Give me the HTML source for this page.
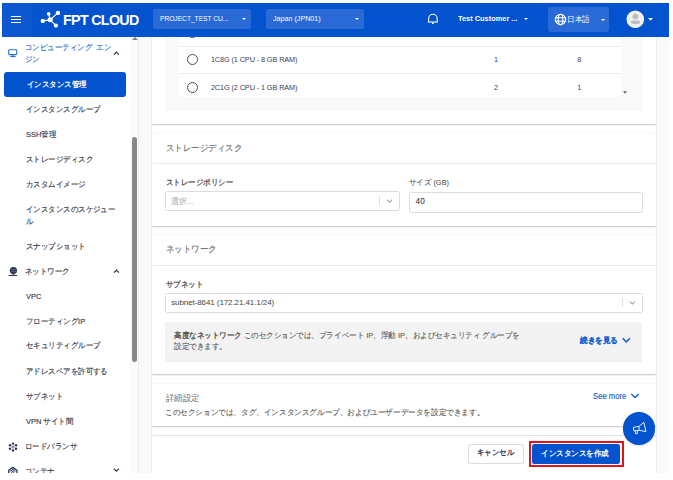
<!DOCTYPE html>
<html><head><meta charset="utf-8">
<style>
*{margin:0;padding:0;box-sizing:border-box}
html,body{width:673px;height:480px;background:#fff;overflow:hidden;font-family:"Liberation Sans",sans-serif}
#app{position:absolute;left:0;top:0;width:673px;height:480px;clip-path:inset(3px 4px 7px 2px);background:#f9f9f9}
.a{position:absolute;white-space:nowrap}
/* header */
#hdr{position:absolute;left:0;top:0;width:673px;height:36.5px;background:#0352ce}
#ham{position:absolute;left:0;top:0;width:32px;height:36.5px;background:#0d58d0}
.hb{position:absolute;left:11px;width:10px;height:1.3px;background:#fff}
.dd{position:absolute;top:9px;height:20px;background:#2a6ad6;border-radius:2px;color:#fff;font-size:7.8px;line-height:20px}
.sx{position:absolute;display:inline-block;white-space:nowrap;transform-origin:0 50%}
.caret{position:absolute;width:0;height:0;border-left:2.7px solid transparent;border-right:2.7px solid transparent;border-top:2.8px solid #fff}
/* sidebar */
#side{position:absolute;left:0;top:36.5px;width:130px;height:450px;background:#fff}
#strack{position:absolute;left:130px;top:36.5px;width:8px;height:450px;background:#fafafa}
#sline{position:absolute;left:138px;top:36.5px;width:1px;height:450px;background:#ececec}
.si{position:absolute;left:26.2px;margin-top:0.8px;font-size:8px;line-height:12px;color:#353a4c;-webkit-text-stroke:0.15px currentColor;white-space:nowrap;transform-origin:0 50%;transform:scaleX(0.93)}
.radio{position:absolute;left:187px;width:11px;height:11px;border:1.1px solid #4a5170;border-radius:50%}
.tt{position:absolute;white-space:nowrap;font-size:7.3px;line-height:10px;color:#3c4150}
.ct{position:absolute;left:166px;white-space:nowrap;font-size:9px;line-height:12px;color:#737373;-webkit-text-stroke:0.15px #737373;transform-origin:0 50%;transform:scaleX(0.94)}
.lb{position:absolute;left:166px;margin-top:0.6px;white-space:nowrap;font-size:8px;line-height:12px;color:#545454;font-weight:bold;transform-origin:0 50%;transform:scaleX(0.93)}
.inp{position:absolute;left:165.4px;height:20.2px;border:1px solid #dcdcdc;border-radius:2.5px;background:#fff}
.dsc{position:absolute;white-space:nowrap;font-size:8px;line-height:11px;color:#5a5a5a;-webkit-text-stroke:0.12px currentColor;transform-origin:0 50%;transform:scaleX(0.94)}
.card{position:absolute;left:151px;width:506px;background:#fff;border:1px solid #ebebeb;border-top-color:#f7f7f7;border-bottom-color:#cfcfcf;border-radius:3px;box-shadow:0 1px 0.6px rgba(0,0,0,.05)}
</style></head><body>
<div id="app">
  <!-- main cards -->
  <div class="a" style="left:151px;top:0;width:506px;height:480px;background:#fff;border-left:1px solid #ededed;border-right:1px solid #ededed"></div>
  <div class="card" style="top:0;height:125px"></div>
  <div class="a" style="left:165.2px;top:0;width:477.4px;height:110.8px;background:#f9f9f9"></div>
  <div class="a" style="left:178.6px;top:0;width:442.8px;height:97px;background:#fff"></div>
  <div class="a" style="left:621.4px;top:0;width:7.6px;height:97px;background:#f9f9f9"></div>
  <div class="a" style="left:178.6px;top:46px;width:442.8px;height:1px;background:#ededed"></div>
  <div class="a" style="left:178.6px;top:73.2px;width:442.8px;height:1px;background:#ededed"></div>
  <div class="a" style="left:622.6px;top:90.8px;width:0;height:0;border-left:2.4px solid transparent;border-right:2.4px solid transparent;border-top:3.2px solid #7a7a7a"></div>
  <div class="radio" style="top:27px"></div>
  <div class="radio" style="top:54.3px"></div>
  <div class="radio" style="top:81.7px"></div>
  <div class="tt" style="left:210.9px;top:54.7px;letter-spacing:-0.1px">1C8G (1 CPU - 8 GB RAM)</div>
  <div class="tt" style="left:210.9px;top:82.7px;letter-spacing:-0.1px">2C1G (2 CPU - 1 GB RAM)</div>
  <div class="tt" style="left:493.9px;top:54.7px">1</div>
  <div class="tt" style="left:577.3px;top:54.7px">8</div>
  <div class="tt" style="left:493.9px;top:82.7px">2</div>
  <div class="tt" style="left:577.3px;top:82.7px">1</div>
  <div class="card" style="top:132px;height:94.5px"></div>
  <div class="ct" style="top:141.6px">ストレージディスク</div>
  <div class="a" style="left:152.5px;top:162.8px;width:503px;height:1px;background:#eaeaea"></div>
  <div class="lb" style="top:176.4px">ストレージポリシー</div>
  <div class="inp" style="top:191.2px;width:234.4px"></div>
  <div class="si" style="left:171.3px;top:195.6px;color:#b8b8b8;transform:none;margin:0">選択...</div>
  <div class="a" style="left:379px;top:196px;width:1px;height:8.5px;background:#dedede"></div>
  <svg class="a" style="left:386px;top:198px" width="8" height="6" viewBox="386 198 8 6"><path d="M387.2 199.7 L389.7 202.3 L392.2 199.7" stroke="#9a9a9a" stroke-width="1.05" fill="none"/></svg>
  <div class="lb" style="left:409.3px;top:176.8px;font-weight:normal;color:#454545">サイズ (GB)</div>
  <div class="inp" style="left:409px;top:191.5px;width:233.7px;height:21px"></div>
  <div class="tt" style="left:415.6px;top:196.6px;color:#1e2a4a;font-size:8.2px">40</div>
  <div class="card" style="top:234px;height:141.4px"></div>
  <div class="ct" style="top:242.8px">ネットワーク</div>
  <div class="a" style="left:152.5px;top:265px;width:503px;height:1px;background:#eaeaea"></div>
  <div class="lb" style="top:278px">サブネット</div>
  <div class="inp" style="top:292.6px;width:477.2px;height:20.4px"></div>
  <div class="tt" style="left:171.2px;top:298px;color:#464646;font-size:8px;letter-spacing:-0.09px">subnet-8641 (172.21.41.1/24)</div>
  <div class="a" style="left:622px;top:298px;width:1px;height:9px;background:#dedede"></div>
  <svg class="a" style="left:628px;top:300px" width="9" height="6" viewBox="628 300 9 6"><path d="M629.8 301.5 L632.4 304.1 L635 301.5" stroke="#9a9a9a" stroke-width="1.05" fill="none"/></svg>
  <div class="a" style="left:165.2px;top:321.6px;width:477.2px;height:40px;background:#f3f3f3;border-bottom:1px solid #ececec"></div>
  <div class="dsc" style="left:173.8px;top:330.2px"><b style="color:#4a4a4a;-webkit-text-stroke:0">高度なネットワーク</b> このセクションでは、プライベート IP、浮動 IP、およびセキュリティ グループを</div>
  <div class="dsc" style="left:173.8px;top:341.4px">設定できます。</div>
  <div class="a" style="left:579.8px;top:335.1px;font-size:8px;line-height:12px;font-weight:bold;color:#1b5fd0;-webkit-text-stroke:0.15px #1b5fd0;transform-origin:0 50%;transform:scaleX(0.94)">続きを見る</div>
  <svg class="a" style="left:620px;top:334px" width="12" height="12" viewBox="620 334 12 12"><path d="M622.6 338.2 L626.3 341.9 L630 338.2" stroke="#1b5fd0" stroke-width="1.6" fill="none"/></svg>
  <div class="card" style="top:383px;height:44px"></div>
  <div class="ct" style="top:392px;-webkit-text-stroke:0;color:#6a6a6a">詳細設定</div>
  <div class="dsc" style="left:164.7px;top:406.8px;color:#5a5a5a;transform:scaleX(0.95)">このセクションでは、タグ、インスタンスグループ、およびユーザーデータを設定できます。</div>
  <div class="a" style="left:592.8px;top:390.9px;font-size:8.5px;line-height:10px;color:#1b5fd0;transform-origin:0 50%;transform:scaleX(0.905);-webkit-text-stroke:0.15px #1b5fd0">See more</div>
  <svg class="a" style="left:629px;top:391px" width="12" height="9" viewBox="629 391 12 9"><path d="M631.3 394 L635 397.5 L638.7 394" stroke="#1b5fd0" stroke-width="1.5" fill="none"/></svg>
  <div class="card" style="top:435px;height:60px;border-top-color:#e6e6e6"></div>
  <div class="a" style="left:468.4px;top:444.3px;width:55.3px;height:19.9px;border:1px solid #dcdcdc;border-radius:2.5px;background:#fff"></div>
  <div class="a" style="left:477px;top:447.2px;font-size:8px;line-height:12px;font-weight:bold;color:#2b3350;transform-origin:0 50%;transform:scaleX(0.93)">キャンセル</div>
  <div class="a" style="left:528.9px;top:441px;width:94.7px;height:26.2px;border:2px solid #e11219"></div>
  <div class="a" style="left:532px;top:443.8px;width:88.2px;height:20.7px;background:#0352ce;border-radius:2.5px"></div>
  <div class="a" style="left:541.4px;top:447.6px;font-size:8px;line-height:12px;font-weight:bold;color:#fff;transform-origin:0 50%;transform:scaleX(0.94)">インスタンスを作成</div>
  <div class="a" style="left:622.8px;top:412px;width:32.6px;height:32.6px;border-radius:50%;background:#0352ce;box-shadow:0 1px 2px rgba(0,0,0,.15)"></div>
  <svg class="a" style="left:628px;top:418px" width="22" height="20" viewBox="628 418 22 20">
    <g stroke="#fff" stroke-width="0.9" fill="none" stroke-linejoin="round">
      <path d="M639 426.4 L643.9 422.3 L645.9 431.5 L639 430.3 Z"/>
      <path d="M639 426.4 L633.4 427.3 L633.8 430.9 L639 430.3"/>
      <path d="M634.9 430.8 L635.8 434 L637.6 433.6 L637.1 430.6"/>
    </g>
  </svg>
  <!-- sidebar -->
  <div id="side"></div>
  <div id="strack"></div>
  <div id="sline"></div>
  <div class="a" style="left:132px;top:137px;width:5px;height:225px;border-radius:2.5px;background:#888"></div>
  <div class="a" style="left:131.6px;top:37.4px;width:0;height:0;border-left:3px solid transparent;border-right:3px solid transparent;border-bottom:3.4px solid #7e7e7e"></div>
  <svg class="a" style="left:6px;top:46px" width="14" height="14" viewBox="6 46 14 14">
    <rect x="8.7" y="49.8" width="8" height="4.8" rx="0.6" stroke="#2f6fd8" stroke-width="1.1" fill="none"/>
    <line x1="12.7" y1="54.6" x2="12.7" y2="56.4" stroke="#2f6fd8" stroke-width="1.1"/>
    <line x1="10.2" y1="56.5" x2="15.6" y2="56.5" stroke="#2f6fd8" stroke-width="1.2"/>
  </svg>
  <div class="si" style="left:25.3px;top:41.4px;color:#2f6fd8">コンピューティング&nbsp;&nbsp;エン</div>
  <div class="si" style="left:25.3px;top:53.3px;color:#2f6fd8">ジン</div>
  <svg class="a" style="left:112px;top:50px" width="9" height="7" viewBox="112 50 9 7"><path d="M113.9 54.6 L116.4 52.2 L118.9 54.6" stroke="#3a3f5a" stroke-width="1.3" fill="none"/></svg>
  <div class="a" style="left:4px;top:72px;width:122px;height:25px;background:#0352ce;border-radius:3px"></div>
  <div class="si" style="left:26.7px;top:78px;color:#fff;font-weight:bold;-webkit-text-stroke:0">インスタンス管理</div>
  <div class="si" style="top:103.3px">インスタンスグループ</div>
  <div class="si" style="top:128.2px">SSH管理</div>
  <div class="si" style="top:153.3px">ストレージディスク</div>
  <div class="si" style="top:178.2px">カスタムイメージ</div>
  <div class="si" style="top:202.9px">インスタンスのスケジュー</div>
  <div class="si" style="top:215.6px">ル</div>
  <div class="si" style="top:240px">スナップショット</div>
  <svg class="a" style="left:6px;top:264px" width="14" height="14" viewBox="6 264 14 14">
    <circle cx="13.4" cy="270.5" r="3.6" fill="#2c3356"/>
    <path d="M11.9 273.5 L13.4 275.2 L14.9 273.5Z" fill="#2c3356"/>
    <line x1="8.8" y1="275.5" x2="17.1" y2="275.5" stroke="#2c3356" stroke-width="1"/>
    <line x1="11" y1="269.6" x2="15.8" y2="269.6" stroke="#8a90b0" stroke-width="0.5"/>
    <line x1="11" y1="271.4" x2="15.8" y2="271.4" stroke="#8a90b0" stroke-width="0.5"/>
  </svg>
  <div class="si" style="left:25px;top:265.2px">ネットワーク</div>
  <svg class="a" style="left:112px;top:268px" width="9" height="7" viewBox="112 268 9 7"><path d="M113.9 272.6 L116.4 270.2 L118.9 272.6" stroke="#3a3f5a" stroke-width="1.3" fill="none"/></svg>
  <div class="si" style="top:290.2px">VPC</div>
  <div class="si" style="top:315.2px">フローティングIP</div>
  <div class="si" style="top:339.7px">セキュリティグループ</div>
  <div class="si" style="top:365.2px">アドレスペアを許可する</div>
  <div class="si" style="top:390.2px">サブネット</div>
  <div class="si" style="top:415.2px">VPN サイト間</div>
  <svg class="a" style="left:6px;top:439.5px" width="14" height="14" viewBox="6 439 14 14">
    <g fill="#2c3356"><circle cx="13" cy="442.6" r="1.2"/><circle cx="13" cy="449.4" r="1.2"/>
    <circle cx="10" cy="444.3" r="1.2"/><circle cx="16" cy="444.3" r="1.2"/><circle cx="10" cy="447.7" r="1.2"/><circle cx="16" cy="447.7" r="1.2"/></g>
    <circle cx="13" cy="446" r="1.1" stroke="#2c3356" stroke-width="0.7" fill="none"/>
  </svg>
  <div class="si" style="left:25px;top:440.2px">ロードバランサ</div>
  <svg class="a" style="left:6px;top:464px" width="14" height="10" viewBox="6 464 14 10">
    <path d="M8.7 473 V470.2 L12.8 467.4 L16.9 470.2 V473" stroke="#2c3356" stroke-width="1.3" fill="none" stroke-linejoin="round"/>
    <path d="M10.2 469.6 L14.6 473 M15.4 469.6 L11 473 M11.6 468.6 L15.6 471.6 M14 468.6 L10 471.6" stroke="#2c3356" stroke-width="0.8" fill="none"/>
  </svg>
  <div class="si" style="left:25px;top:465px">コンテナ</div>
  <svg class="a" style="left:112px;top:467px" width="9" height="7" viewBox="112 467 9 7"><path d="M113.9 468.8 L116.4 471.2 L118.9 468.8" stroke="#3a3f5a" stroke-width="1.3" fill="none"/></svg>
  <!-- header -->
  <div id="hdr">
    <div id="ham">
      <div class="hb" style="top:16px"></div>
      <div class="hb" style="top:18.9px"></div>
      <div class="hb" style="top:21.8px"></div>
    </div>
    <svg class="a" style="left:36px;top:6px" width="28" height="26" viewBox="36 6 28 26">
      <g stroke="#fff" stroke-width="1.2" fill="none">
        <line x1="50.2" y1="19.8" x2="42.8" y2="20.9"/><line x1="50.2" y1="19.8" x2="48.7" y2="13.9"/>
        <line x1="50.2" y1="19.8" x2="57.9" y2="12.9"/><line x1="50.2" y1="19.8" x2="55.9" y2="25.6"/>
      </g>
      <g fill="#fff">
        <circle cx="50.2" cy="19.8" r="2.5"/><circle cx="42.8" cy="20.9" r="2.2"/><circle cx="48.7" cy="13.9" r="1.8"/>
        <circle cx="57.9" cy="12.9" r="2.2"/><circle cx="55.9" cy="25.6" r="2.1"/>
      </g>
    </svg>
    <div class="a" style="left:62.6px;top:9.6px;font-size:15px;font-weight:bold;color:#fff;line-height:20px;letter-spacing:-0.7px;transform-origin:0 0;transform:scaleX(0.95)">FPT CLOUD</div>
    <div class="dd" style="left:153px;width:98px"><span class="sx" style="left:7px;transform:scaleX(0.85)">PROJECT_TEST CU...</span><div class="caret" style="top:9px;left:89px"></div></div>
    <div class="dd" style="left:266px;width:98px"><span class="sx" style="left:6.5px;transform:scaleX(0.917)">Japan (JPN01)</span><div class="caret" style="top:9px;left:89px"></div></div>
    <svg class="a" style="left:426px;top:12px" width="14" height="14" viewBox="426 12 14 14">
      <path d="M428.6 21.8 V18.6 A4.3 4.3 0 0 1 437.2 18.6 V21.8" stroke="#fff" stroke-width="1.1" fill="none"/>
      <line x1="427.8" y1="22" x2="438" y2="22" stroke="#fff" stroke-width="1.1"/>
      <circle cx="432.9" cy="23.2" r="0.9" fill="#fff"/>
    </svg>
    <div class="a" style="left:458px;top:9px;line-height:20px;font-size:8.1px;font-weight:bold;color:#fff;transform-origin:0 0;transform:scaleX(0.915)">Test Customer ...</div>
    <div class="caret" style="left:524px;top:18px"></div>
    <div class="dd" style="left:548px;top:7.3px;height:24.3px;width:61px;border-radius:3px">
      <svg class="a" style="left:6px;top:5.5px" width="13" height="13" viewBox="0 0 13 13">
        <g stroke="#fff" stroke-width="1.1" fill="none">
          <circle cx="6.5" cy="6.5" r="5.1"/><ellipse cx="6.5" cy="6.5" rx="2.3" ry="5.2"/>
          <line x1="1.3" y1="4.8" x2="11.7" y2="4.8"/><line x1="1.3" y1="8.2" x2="11.7" y2="8.2"/>
        </g>
      </svg>
      <span class="a" style="left:18.5px;top:0.6px;line-height:24px;font-size:7.5px;transform-origin:0 50%;transform:scaleX(0.95)">日本語</span>
      <div class="caret" style="left:53px;top:11.7px;border-left-width:2.6px;border-right-width:2.6px;border-top-width:2.6px"></div>
    </div>
    <svg class="a" style="left:624px;top:8px" width="32" height="24" viewBox="624 8 32 24">
      <circle cx="635.3" cy="19.25" r="8.8" fill="#f0f0f0"/>
      <circle cx="635.4" cy="16.4" r="2.9" fill="#bdbdbd"/>
      <path d="M631 22 Q631 20.6 633 20.6 H638 Q640 20.6 640 22 Q640 24.2 635.5 24.2 Q631 24.2 631 22Z" fill="#bdbdbd"/>
      <path d="M648 18 H653 L650.5 20.8Z" fill="#fff"/>
    </svg>
  </div>
</div>
</body></html>
